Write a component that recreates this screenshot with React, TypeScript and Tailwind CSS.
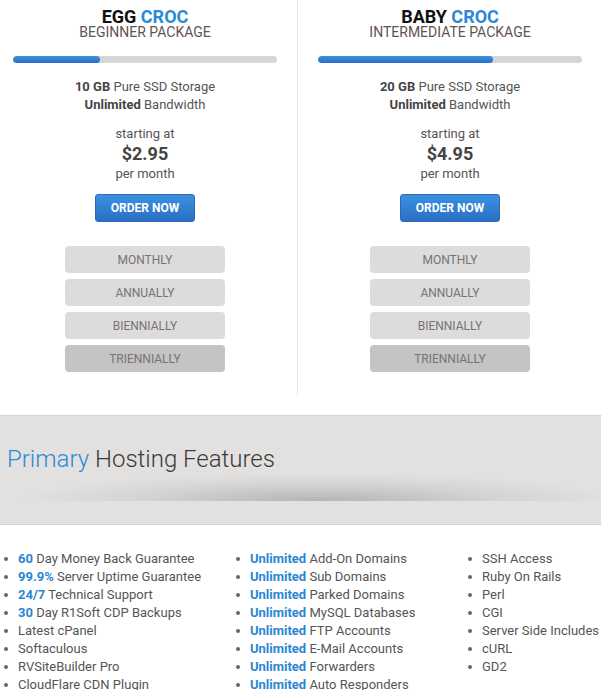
import React from 'react';

const plans = [
  { name: 'EGG', sub: 'BEGINNER PACKAGE', gb: '10 GB', price: '$2.95', fill: 87 },
  { name: 'BABY', sub: 'INTERMEDIATE PACKAGE', gb: '20 GB', price: '$4.95', fill: 175 },
];

const periods = ['MONTHLY', 'ANNUALLY', 'BIENNIALLY', 'TRIENNIALLY'];

const col1: [string, string][] = [
  ['60', ' Day Money Back Guarantee'],
  ['99.9%', ' Server Uptime Guarantee'],
  ['24/7', ' Technical Support'],
  ['30', ' Day R1Soft CDP Backups'],
  ['', 'Latest cPanel'],
  ['', 'Softaculous'],
  ['', 'RVSiteBuilder Pro'],
  ['', 'CloudFlare CDN Plugin'],
];

const col2: [string, string][] = [
  ['Unlimited', ' Add-On Domains'],
  ['Unlimited', ' Sub Domains'],
  ['Unlimited', ' Parked Domains'],
  ['Unlimited', ' MySQL Databases'],
  ['Unlimited', ' FTP Accounts'],
  ['Unlimited', ' E-Mail Accounts'],
  ['Unlimited', ' Forwarders'],
  ['Unlimited', ' Auto Responders'],
];

const col3: [string, string][] = [
  ['', 'SSH Access'],
  ['', 'Ruby On Rails'],
  ['', 'Perl'],
  ['', 'CGI'],
  ['', 'Server Side Includes'],
  ['', 'cURL'],
  ['', 'GD2'],
];

function Plan({ plan }: { plan: (typeof plans)[number] }) {
  return (
    <div className="w-[264px] flex flex-col items-center pt-[8px] pb-[23px]">
      <h2 className="text-[18px] leading-[17px] font-bold text-[#111]">
        {plan.name} <span className="text-[#2b8ad8]">CROC</span>
      </h2>
      <p className="text-[14px] leading-[14px] text-[#5f5454]">{plan.sub}</p>
      <div className="mt-[17px] w-full h-[7px] rounded-full bg-[#d6d6d6] overflow-hidden">
        <div
          className="h-full rounded-full bg-gradient-to-b from-[#3d92e2] to-[#2a6ec2]"
          style={{ width: plan.fill }}
        />
      </div>
      <div className="mt-[15px] text-[13px] leading-[18px] text-[#555] text-center">
        <p>
          <b className="font-bold text-[#444]">{plan.gb}</b> Pure SSD Storage
        </p>
        <p>
          <b className="font-bold text-[#444]">Unlimited</b> Bandwidth
        </p>
      </div>
      <div className="mt-[11px] text-[13px] leading-[18px] text-[#555] text-center">
        <p>starting at</p>
        <p className="text-[18px] leading-[22px] font-bold text-[#444]">{plan.price}</p>
        <p>per month</p>
      </div>
      <button className="mt-[11px] w-[100px] h-[28px] rounded-[3px] border border-[#2a6bbd] bg-gradient-to-b from-[#3b91e0] to-[#2b6fc4] text-white text-[12px] font-bold">
        ORDER NOW
      </button>
      <div className="mt-[24px] flex flex-col gap-[6px]">
        {periods.map((p, i) => (
          <button
            key={p}
            className={`w-[160px] h-[27px] rounded-[4px] text-[12px] text-[#7a7272] ${
              i === 3 ? 'bg-[#c4c4c4]' : 'bg-[#dcdcdc]'
            }`}
          >
            {p}
          </button>
        ))}
      </div>
    </div>
  );
}

function FeatureList({ items, className }: { items: [string, string][]; className: string }) {
  return (
    <ul className={className}>
      {items.map(([hl, rest]) => (
        <li key={hl + rest} className="flex items-center h-[18px] pl-[4px] gap-[10px]">
          <span className="w-[4px] h-[4px] rounded-full bg-[#666] shrink-0" />
          <span className="whitespace-nowrap">
            {hl && <b className="font-bold text-[#2a86d3]">{hl}</b>}
            {rest}
          </span>
        </li>
      ))}
    </ul>
  );
}

export default function App() {
  return (
    <div className="w-[601px] h-[690px] overflow-hidden bg-white font-['Roboto','Liberation_Sans',sans-serif]">
      <div className="flex">
        <div className="w-[298px] pl-[13px] border-r border-[#e6e6e6]">
          <Plan plan={plans[0]} />
        </div>
        <div className="flex-1 pl-[20px]">
          <Plan plan={plans[1]} />
        </div>
      </div>

      <div className="mt-[20px] border-t border-b border-[#d4d4d4] bg-[#e2e1e0]">
        <div className="h-[85px] flex items-center pl-[7px] bg-[radial-gradient(ellipse_50%_28px_at_53%_100%,rgba(0,0,0,0.2),rgba(0,0,0,0.06)_60%,rgba(0,0,0,0)_100%)]">
          <h2 className="text-[24px] font-light text-[#3a3a3a]">
            <span className="text-[#2b8ad8]">Primary</span> Hosting Features
          </h2>
        </div>
        <div className="h-[23px]" />
      </div>

      <div className="pt-[25px] flex text-[13px] leading-[18px] text-[#555]">
        <FeatureList items={col1} className="w-[232px]" />
        <FeatureList items={col2} className="w-[232px]" />
        <FeatureList items={col3} className="flex-1" />
      </div>
    </div>
  );
}
